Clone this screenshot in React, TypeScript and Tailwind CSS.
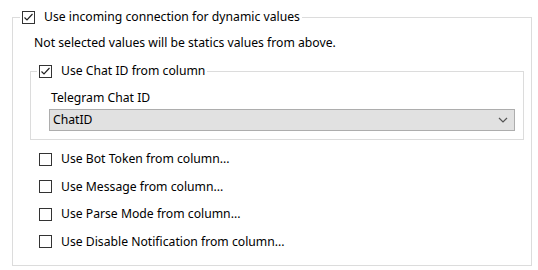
import React from 'react';

type BoxProps = { checked?: boolean };

// Classic Windows-style check box
function CheckBox({ checked }: BoxProps) {
  return (
    <span className="w-[13px] h-[13px] border border-[#333333] bg-white flex items-center justify-center shrink-0">
      {checked && (
        <svg width="11" height="11" viewBox="0 0 11 11">
          <polyline points="1.5,5.5 4,8 9.5,2" fill="none" stroke="#222222" strokeWidth="1.2" />
        </svg>
      )}
    </span>
  );
}

const columnOptions = [
  'Use Bot Token from column...',
  'Use Message from column...',
  'Use Parse Mode from column...',
  'Use Disable Notification from column...',
];

export default function App() {
  return (
    <div
      className="w-[538px] h-[270px] bg-white pl-[12px] pt-[8px] text-[12.2px] leading-[16px] text-black"
      style={{ fontFamily: '"Noto Sans", "Open Sans", sans-serif' }}
    >
      <fieldset className="w-[520px] h-[258px] border border-[#dcdcdc]">
        <legend className="ml-[7px] px-[2px] h-[18px] flex items-center gap-[9px]">
          <CheckBox checked />
          <span>Use incoming connection for dynamic values</span>
        </legend>

        <p className="pl-[21px] mt-[9px]">Not selected values will be statics values from above.</p>

        <fieldset className="ml-[17px] mt-[11px] w-[494px] h-[78px] border border-[#dcdcdc]">
          <legend className="ml-[6px] px-[2px] h-[18px] flex items-center gap-[9px]">
            <CheckBox checked />
            <span>Use Chat ID from column</span>
          </legend>
          <div className="pl-[20px] mt-[10px]">Telegram Chat ID</div>
          <div className="ml-[18px] mt-[3px] w-[466px] h-[22px] bg-[#e1e1e1] border border-[#adadad] flex items-center justify-between pl-[3px] pr-[6px]">
            <span>ChatID</span>
            <svg width="10" height="6" viewBox="0 0 10 6">
              <polyline points="1,1 5,5 9,1" fill="none" stroke="#555555" strokeWidth="1.2" />
            </svg>
          </div>
        </fieldset>

        <div className="ml-[26px] mt-[11px] flex flex-col gap-[11.5px]">
          {columnOptions.map(label => (
            <div key={label} className="flex items-center gap-[9px] h-[16px]">
              <CheckBox />
              <span>{label}</span>
            </div>
          ))}
        </div>
      </fieldset>
    </div>
  );
}
